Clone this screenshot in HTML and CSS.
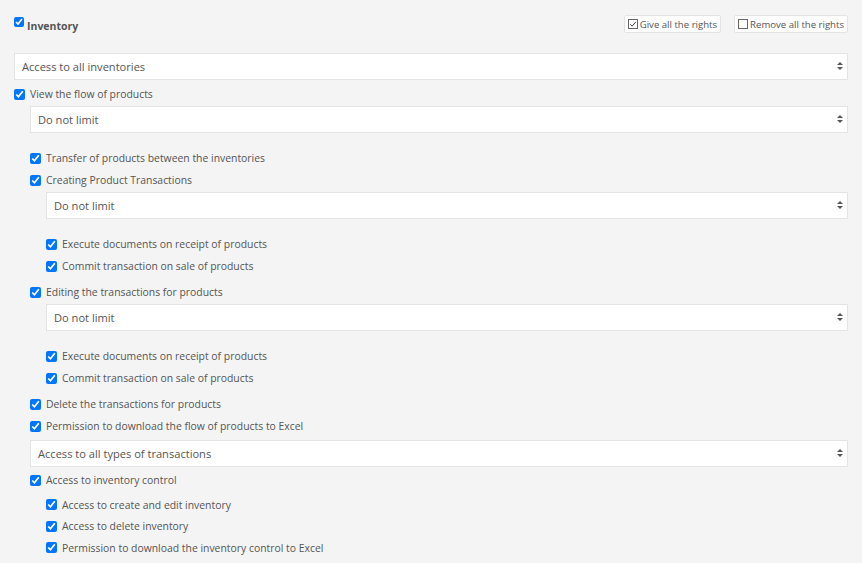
FILE: index.html
```html
<!DOCTYPE html>
<html lang="en">
<head>
  <meta charset="UTF-8" />
  <title>Inventory rights</title>
  <link rel="stylesheet" href="styles.css">
</head>
<body>
  <div class="panel">
    <div class="head">
      <label class="title"><input type="checkbox" checked /> Inventory</label>
      <div class="actions">
        <button class="btn"><span class="box">
          <svg viewBox="0 0 10 10" width="10" height="10"><rect x="0.5" y="0.5" width="9" height="9" fill="#fff" stroke="#666"/><path d="M2.2 5.2 L4.2 7.1 L7.9 2.8" fill="none" stroke="#444" stroke-width="1"/></svg>
        </span>Give all the rights</button>
        <button class="btn"><span class="box">
          <svg viewBox="0 0 10 10" width="10" height="10"><rect x="0.5" y="0.5" width="9" height="9" fill="#fff" stroke="#666"/></svg>
        </span>Remove all the rights</button>
      </div>
    </div>

    <div class="select top">Access to all inventories<span class="arrows"></span></div>

    <label class="row"><input type="checkbox" checked /> View the flow of products</label>
    <div class="level">
      <div class="select sub">Do not limit<span class="arrows"></span></div>

      <label class="row"><input type="checkbox" checked /> Transfer of products between the inventories</label>
      <label class="row"><input type="checkbox" checked /> Creating Product Transactions</label>
      <div class="level">
        <div class="select sub">Do not limit<span class="arrows"></span></div>
        <label class="row"><input type="checkbox" checked /> Execute documents on receipt of products</label>
        <label class="row"><input type="checkbox" checked /> Commit transaction on sale of products</label>
      </div>

      <label class="row"><input type="checkbox" checked /> Editing the transactions for products</label>
      <div class="level">
        <div class="select sub">Do not limit<span class="arrows"></span></div>
        <label class="row"><input type="checkbox" checked /> Execute documents on receipt of products</label>
        <label class="row"><input type="checkbox" checked /> Commit transaction on sale of products</label>
      </div>

      <label class="row"><input type="checkbox" checked /> Delete the transactions for products</label>
      <label class="row"><input type="checkbox" checked /> Permission to download the flow of products to Excel</label>

      <div class="select types">Access to all types of transactions<span class="arrows"></span></div>

      <label class="row"><input type="checkbox" checked /> Access to inventory control</label>
      <div class="level tight">
        <label class="row"><input type="checkbox" checked /> Access to create and edit inventory</label>
        <label class="row"><input type="checkbox" checked /> Access to delete inventory</label>
        <label class="row"><input type="checkbox" checked /> Permission to download the inventory control to Excel</label>
      </div>
    </div>
  </div>
</body>
</html>
```

FILE: styles.css
```css
body {
  margin: 0;
  background: #f4f4f4;
  font-family: "Open Sans", sans-serif;
  color: #555;
  overflow: hidden;
}

.panel {
  padding: 13px 14px 0 14px;
}

.head {
  display: flex;
  justify-content: space-between;
  align-items: flex-start;
  height: 40px;
}

.title {
  display: flex;
  align-items: center;
  gap: 3px;
  font-weight: bold;
  font-size: 10.5px;
  color: #555;
  margin-top: 6px;
}

.title input {
  margin: 0;
  width: 10px;
  height: 10px;
  position: relative;
  top: -4px;
}

.actions {
  display: flex;
  gap: 13px;
  margin-top: 2px;
}

.btn {
  display: flex;
  align-items: center;
  gap: 2px;
  height: 18px;
  padding: 0 3px;
  background: #fff;
  border: 1px solid #e3e3e3;
  border-radius: 2px;
  font-family: "Open Sans", sans-serif;
  font-size: 9.6px;
  color: #555;
}

.box {
  display: flex;
}

.select {
  position: relative;
  height: 25px;
  line-height: 25px;
  padding: 0 7px;
  background: #fff;
  border: 1px solid #e4e4e4;
  font-size: 11.1px;
  color: #555;
}

.select.top {
  margin-bottom: 3px;
}

.select.sub {
  margin-top: 1px;
  margin-bottom: 14px;
}

.select.types {
  margin-top: 3px;
  margin-bottom: 2px;
}

.arrows {
  position: absolute;
  right: 4px;
  top: 8px;
  width: 0;
  height: 0;
  border-left: 3px solid transparent;
  border-right: 3px solid transparent;
  border-bottom: 3px solid #555;
}

.arrows::after {
  content: "";
  position: absolute;
  left: -3px;
  top: 5px;
  border-left: 3px solid transparent;
  border-right: 3px solid transparent;
  border-top: 3px solid #555;
}

.row {
  display: flex;
  align-items: center;
  gap: 5px;
  height: 22px;
  font-size: 10.4px;
  color: #555;
}

.row input {
  margin: 0;
  width: 11px;
  height: 11px;
}

.level {
  padding-left: 16px;
}

.level .level {
  margin-bottom: 4px;
}

.tight {
  margin-top: 3px;
}

.tight .row {
  height: 21.6px;
}
```
